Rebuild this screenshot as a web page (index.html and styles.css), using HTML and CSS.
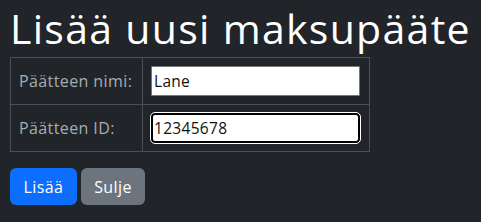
FILE: index.html
```html
<!DOCTYPE html>
<html lang="fi">
<head>
<meta charset="utf-8">
<link rel="stylesheet" href="styles.css">
</head>
<body>
<h1 class="title">Lisää uusi maksupääte</h1>
<table class="form-table">
  <tr>
    <td class="label">Päätteen nimi:</td>
    <td class="field"><input class="input" type="text" value="Lane"></td>
  </tr>
  <tr>
    <td class="label">Päätteen ID:</td>
    <td class="field"><input class="input focused" type="text" value="12345678"></td>
  </tr>
</table>
<div class="actions">
  <button class="btn btn-primary">Lisää</button>
  <button class="btn btn-secondary">Sulje</button>
</div>
</body>
</html>
```
FILE: styles.css
```css
html, body {
  margin: 0;
  background: #212529;
}
body {
  padding: 0 4px 0 10px;
  font-family: "Open Sans", "DejaVu Sans", sans-serif;
  color: #dee2e6;
}
.title {
  margin: 0 0 1px;
  padding: 0;
  font-size: 41px;
  font-weight: 400;
  letter-spacing: 1.3px;
  line-height: normal;
  color: #ffffff;
  white-space: nowrap;
}
.form-table {
  border-collapse: collapse;
  width: 360px;
}
.form-table td {
  border: 1px solid #4a4f54;
  padding: 8px;
  height: 30px;
}
.label {
  width: 115px;
  color: #a7acb1;
  font-size: 16px;
  letter-spacing: 0.4px;
  white-space: nowrap;
}
.field {
  padding: 8px 8px 8px 9px;
}
.input {
  display: block;
  box-sizing: border-box;
  width: 209px;
  height: 30px;
  margin: 0;
  padding: 0 2px;
  border: 1px solid #767676;
  border-radius: 1px;
  background: #fff;
  color: #111;
  font-family: inherit;
  font-size: 15.5px;
  letter-spacing: 0.3px;
}
.focused {
  border: 2px solid #000;
  border-radius: 4px;
  outline: 1px solid #fff;
  padding: 0 1px;
}
.actions {
  display: flex;
  gap: 4px;
  margin-top: 16px;
}
.btn {
  height: 37px;
  padding: 0 10px;
  border: none;
  border-radius: 6px;
  color: #fff;
  font-family: inherit;
  font-size: 16px;
  letter-spacing: 0.4px;
}
.btn-primary { background: #0d6efd; width: 67px; }
.btn-secondary { background: #6c757d; width: 64px; }
```
